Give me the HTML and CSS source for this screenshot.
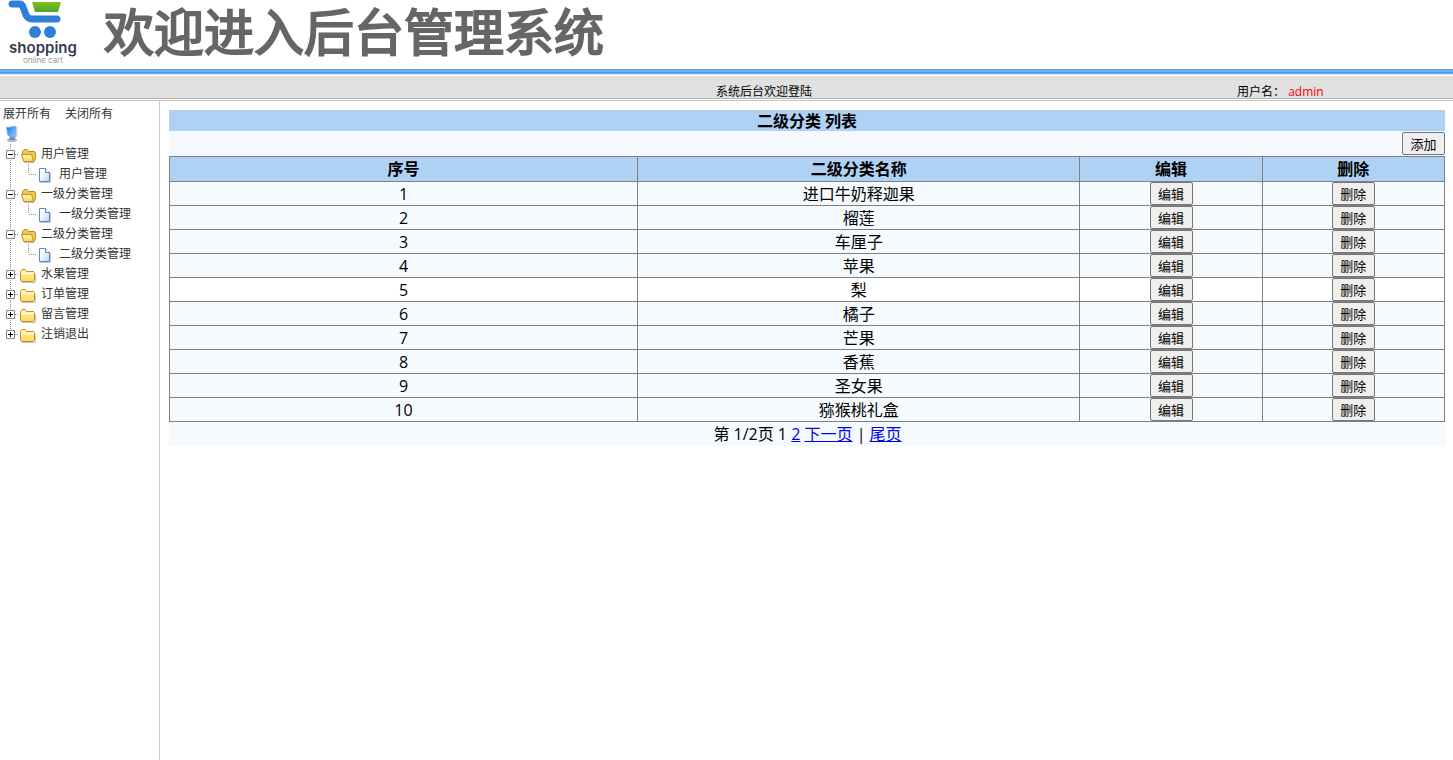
FILE: index.html
```html
<!DOCTYPE html>
<html lang="zh-CN">
  <head>
    <meta charset="UTF-8" />
    <meta name="viewport" content="width=device-width, initial-scale=1.0" />
    <title>欢迎进入后台管理系统</title>
    <link rel="stylesheet" href="styles.css">
  </head>
  <body>
    <svg class="symbols" aria-hidden="true">
      <defs>
        <linearGradient id="gold" x1="0" y1="0" x2="0" y2="1">
          <stop offset="0" stop-color="#fff6b4" />
          <stop offset="1" stop-color="#fbd557" />
        </linearGradient>
        <linearGradient id="paper" x1="0" y1="0" x2="1" y2="1">
          <stop offset="0.3" stop-color="#ffffff" />
          <stop offset="1" stop-color="#b4d0fa" />
        </linearGradient>
        <linearGradient id="screen" x1="0" y1="0" x2="1" y2="1">
          <stop offset="0" stop-color="#1f6fe0" />
          <stop offset="1" stop-color="#7fdcff" />
        </linearGradient>
        <linearGradient id="basket" x1="0" y1="0" x2="0" y2="1">
          <stop offset="0" stop-color="#7cc41c" />
          <stop offset="1" stop-color="#4fa32c" />
        </linearGradient>
      </defs>
      <symbol id="folder" viewBox="0 0 18 20">
        <path d="M3 18.500H16.500V10" fill="none" stroke="#c4c4c4" />
        <path d="M1.500 16.500V7.500L3 5.500H6L7.500 7.500H14.500L15.500 8.500V16.500L14.500 17.500H2.500Z" fill="url(#gold)" stroke="#c0912a" />
        <path d="M2.500 9.500H14.500" stroke="#fffce0" />
      </symbol>
      <symbol id="folder-open" viewBox="0 0 18 20">
        <path d="M5 18.500H15.500" fill="none" stroke="#c4c4c4" />
        <path d="M3.500 15V7.500L5 5.500H8L9.500 7.500H15.500L16.500 9V15L15 17.500Z" fill="#f0c84c" stroke="#b88a2a" />
        <path d="M2.500 10.500H12.500L14.500 17.500H4.500Z" fill="url(#gold)" stroke="#c0912a" />
      </symbol>
      <symbol id="page" viewBox="0 0 18 20">
        <path d="M3 18.500H13.500V9" fill="none" stroke="#c4c4c4" />
        <path d="M2.500 4.500H8.500L12.500 8.500V17.500H2.500Z" fill="url(#paper)" stroke="#6685bd" />
        <path d="M8.500 4.500V8.500H12.500" fill="#fff" stroke="#6685bd" />
      </symbol>
      <symbol id="computer" viewBox="0 0 18 20">
        <ellipse cx="11" cy="16" rx="5" ry="2" fill="#b3b6d2" />
        <path d="M9 12L14 11V16H8Z" fill="#8087b5" />
        <path d="M13 3L16.500 2.500V12L13.500 14.500Z" fill="#c3cfe6" />
        <path d="M5.500 3.500L14.500 2.500L14 13.500L7 11.500Z" fill="url(#screen)" stroke="#7ba7e0" />
      </symbol>
      <symbol id="minus" viewBox="0 0 18 20">
        <path d="M9.500 0V20M14 10.500H18" fill="none" stroke="#8c8c8c" stroke-dasharray="1 1" />
        <path d="M5.500 6.500H13.500V14.500H5.500Z" fill="#fff" stroke="#848484" />
        <path d="M7 10.500H12" stroke="#000" />
      </symbol>
      <symbol id="plus" viewBox="0 0 18 20">
        <path d="M9.500 0V20M14 10.500H18" fill="none" stroke="#8c8c8c" stroke-dasharray="1 1" />
        <path d="M5.500 6.500H13.500V14.500H5.500Z" fill="#fff" stroke="#848484" />
        <path d="M7 10.500H12M9.500 8V13" stroke="#000" />
      </symbol>
      <symbol id="plus-last" viewBox="0 0 18 20">
        <path d="M9.500 0V7M14 10.500H18" fill="none" stroke="#8c8c8c" stroke-dasharray="1 1" />
        <path d="M5.500 6.500H13.500V14.500H5.500Z" fill="#fff" stroke="#848484" />
        <path d="M7 10.500H12M9.500 8V13" stroke="#000" />
      </symbol>
      <symbol id="line" viewBox="0 0 18 20">
        <path d="M9.500 0V20" stroke="#8c8c8c" stroke-dasharray="1 1" />
      </symbol>
      <symbol id="join" viewBox="0 0 18 20">
        <path d="M9.500 0V10M10 10.500H18" fill="none" stroke="#8c8c8c" stroke-dasharray="1 1" />
      </symbol>
    </svg>

    <header>
      <div class="logo">
        <svg class="cart" viewBox="0 0 74 40" aria-hidden="true">
          <path d="M6 4H13Q16 4 17 7L20 15Q22 19 26 19H51" fill="none" stroke="#2f7fd6" stroke-width="7" stroke-linecap="round" stroke-linejoin="round" />
          <path d="M26 2H55L52 12H29Z" fill="url(#basket)" />
          <circle cx="29" cy="32" r="6" fill="#2f7fd6" />
          <circle cx="44" cy="32" r="6" fill="#2f7fd6" />
        </svg>
        <span class="logo-name">shopping</span>
        <span class="logo-sub">online cart</span>
      </div>
      <h1>欢迎进入后台管理系统</h1>
    </header>
    <div class="topbar">
      <span class="welcome">系统后台欢迎登陆</span>
      <span class="user-info">用户名： <span class="user-name">admin</span></span>
    </div>

    <div class="container">
      <nav class="sidebar">
        <div class="tree-actions">
          <a href="#">展开所有</a>
          <a href="#">关闭所有</a>
        </div>
        <div class="tree">
          <div class="node root"><svg class="icon"><use href="#computer" /></svg></div>
          <div class="node"><svg class="branch"><use href="#minus" /></svg><svg class="icon"><use href="#folder-open" /></svg><a href="#">用户管理</a></div>
          <div class="node"><svg class="branch"><use href="#line" /></svg><svg class="branch"><use href="#join" /></svg><svg class="icon"><use href="#page" /></svg><a href="#">用户管理</a></div>
          <div class="node"><svg class="branch"><use href="#minus" /></svg><svg class="icon"><use href="#folder-open" /></svg><a href="#">一级分类管理</a></div>
          <div class="node"><svg class="branch"><use href="#line" /></svg><svg class="branch"><use href="#join" /></svg><svg class="icon"><use href="#page" /></svg><a href="#">一级分类管理</a></div>
          <div class="node"><svg class="branch"><use href="#minus" /></svg><svg class="icon"><use href="#folder-open" /></svg><a href="#">二级分类管理</a></div>
          <div class="node"><svg class="branch"><use href="#line" /></svg><svg class="branch"><use href="#join" /></svg><svg class="icon"><use href="#page" /></svg><a href="#">二级分类管理</a></div>
          <div class="node"><svg class="branch"><use href="#plus" /></svg><svg class="icon"><use href="#folder" /></svg><a href="#">水果管理</a></div>
          <div class="node"><svg class="branch"><use href="#plus" /></svg><svg class="icon"><use href="#folder" /></svg><a href="#">订单管理</a></div>
          <div class="node"><svg class="branch"><use href="#plus" /></svg><svg class="icon"><use href="#folder" /></svg><a href="#">留言管理</a></div>
          <div class="node"><svg class="branch"><use href="#plus-last" /></svg><svg class="icon"><use href="#folder" /></svg><a href="#">注销退出</a></div>
        </div>
      </nav>

      <main>
        <h2>二级分类 列表</h2>
        <div class="toolbar"><button type="button">添加</button></div>
        <table>
          <colgroup>
            <col class="col-no" />
            <col class="col-name" />
            <col class="col-action" />
            <col class="col-action" />
          </colgroup>
          <thead>
            <tr>
              <th>序号</th>
              <th>二级分类名称</th>
              <th>编辑</th>
              <th>删除</th>
            </tr>
          </thead>
          <tbody>
            <tr><td>1</td><td>进口牛奶释迦果</td><td><button type="button">编辑</button></td><td><button type="button">删除</button></td></tr>
            <tr><td>2</td><td>榴莲</td><td><button type="button">编辑</button></td><td><button type="button">删除</button></td></tr>
            <tr><td>3</td><td>车厘子</td><td><button type="button">编辑</button></td><td><button type="button">删除</button></td></tr>
            <tr><td>4</td><td>苹果</td><td><button type="button">编辑</button></td><td><button type="button">删除</button></td></tr>
            <tr class="active"><td>5</td><td>梨</td><td><button type="button">编辑</button></td><td><button type="button">删除</button></td></tr>
            <tr><td>6</td><td>橘子</td><td><button type="button">编辑</button></td><td><button type="button">删除</button></td></tr>
            <tr><td>7</td><td>芒果</td><td><button type="button">编辑</button></td><td><button type="button">删除</button></td></tr>
            <tr><td>8</td><td>香蕉</td><td><button type="button">编辑</button></td><td><button type="button">删除</button></td></tr>
            <tr><td>9</td><td>圣女果</td><td><button type="button">编辑</button></td><td><button type="button">删除</button></td></tr>
            <tr><td>10</td><td>猕猴桃礼盒</td><td><button type="button">编辑</button></td><td><button type="button">删除</button></td></tr>
          </tbody>
        </table>
        <div class="pager">第 1/2页 1 <a href="#">2</a> <a href="#">下一页</a> | <a href="#">尾页</a></div>
      </main>
    </div>
  </body>
</html>
```
FILE: styles.css
```css
* {
  box-sizing: border-box;
}
body {
  display: flex;
  flex-direction: column;
  min-height: 100vh;
  margin: 0;
  font-family: "Open Sans", "Noto Sans CJK SC", sans-serif;
  font-size: 16px;
  color: #000;
  background-color: #fff;
}
.symbols {
  position: absolute;
  width: 0;
  height: 0;
}
header {
  display: flex;
  gap: 24px;
  height: 69px;
  padding-left: 6px;
}
.logo {
  display: flex;
  flex-direction: column;
  align-items: center;
  width: 74px;
}
.cart {
  width: 74px;
  height: 40px;
}
.logo-name {
  font: 600 15px/16px Inter, sans-serif;
  color: #343a4e;
}
.logo-sub {
  font: 8px/8px Inter, sans-serif;
  color: #999;
}
h1 {
  margin: 0;
  font-size: 50px;
  line-height: 64px;
  font-weight: normal;
  color: #666;
  -webkit-text-stroke: 2px #666;
}
.topbar {
  display: flex;
  justify-content: flex-end;
  height: 32px;
  padding-top: 13px;
  border-bottom: 1px solid #c6c6c6;
  background: linear-gradient(#5a9fd8 1px, #6cb6f6 1px, #6cb6f6 3px, #3f9bea 3px, #3f9bea 4px, #6cb6f6 4px, #6cb6f6 5px, #dcdcdc 5px, #dcdcdc 6px, #fff 6px, #fff 7px, #e1e1e1 7px, #e1e1e1 29px, #b4b4b4 29px, #b4b4b4 30px, #fff 30px);
  font-size: 12px;
  line-height: 20px;
}
.welcome {
  margin-right: auto;
  margin-left: 716px;
}
.user-info {
  width: 216px;
}
.user-name {
  color: #f00;
}
.container {
  display: flex;
  flex: 1;
}
.sidebar {
  flex: none;
  width: 160px;
  padding-top: 3px;
  border-right: 1px solid #ccc;
  font-size: 12px;
  line-height: 20px;
}
.sidebar a {
  color: #333;
  text-decoration: none;
  white-space: nowrap;
}
.tree-actions {
  display: flex;
  gap: 14px;
  padding-left: 3px;
}
.tree {
  padding-left: 1px;
}
.node {
  display: flex;
  align-items: center;
  height: 20px;
}
.branch,
.icon {
  width: 18px;
  height: 20px;
}
.node a {
  margin-left: 4px;
}
main {
  flex: 1;
  padding: 9px 7px 0 9px;
}
h2 {
  height: 21px;
  margin: 0 1px 0 0;
  font-size: 16px;
  line-height: 23px;
  text-align: center;
  background-color: #afd1f3;
}
.toolbar {
  display: flex;
  justify-content: flex-end;
  height: 25px;
  padding: 1px 1px 0 0;
  background-color: #f5fafe;
}
button {
  width: 43px;
  height: 23px;
  padding: 0;
  border: 1px solid #767676;
  border-radius: 2px;
  background-color: #efefef;
  font-family: inherit;
  font-size: 13px;
  line-height: 20px;
  color: #000;
}
table {
  width: calc(100% - 1px);
  table-layout: fixed;
  border-collapse: collapse;
  background-color: #f5fafe;
}
.col-no {
  width: 36.7%;
}
.col-name {
  width: 34.7%;
}
.col-action {
  width: 14.3%;
}
th,
td {
  height: 24px;
  padding: 0;
  border: 1px solid #808080;
  line-height: 22px;
  text-align: center;
}
th {
  height: 25px;
  background-color: #afd1f3;
}
td button {
  display: block;
  margin: 0 auto;
}
.active {
  background-color: #fff;
}
.pager {
  line-height: 24px;
  text-align: center;
  background-color: #f5fafe;
}
.pager a {
  color: #00e;
}
```
